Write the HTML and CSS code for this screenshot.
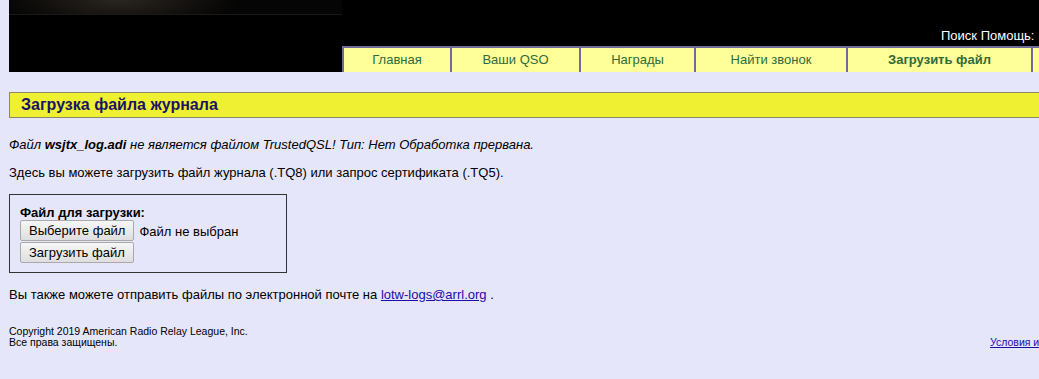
FILE: index.html
```html
<!DOCTYPE html>
<html lang="ru">
<head>
  <meta charset="UTF-8">
  <title>Загрузка файла журнала</title>
  <link rel="stylesheet" href="styles.css">
</head>
<body>

  <!-- header with logo strip, search links and menu -->
  <div class="header">
    <div class="logo-strip"></div>
    <div class="tools">Поиск Помощь:</div>
    <div class="menu">
      <a class="menu-item w1" href="#">Главная</a>
      <a class="menu-item w2" href="#">Ваши QSO</a>
      <a class="menu-item w3" href="#">Награды</a>
      <a class="menu-item w4" href="#">Найти звонок</a>
      <a class="menu-item w5 current" href="#">Загрузить файл</a>
      <a class="menu-item w6" href="#">Ваш аккаунт</a>
    </div>
  </div>

  <h2 class="page-title">Загрузка файла журнала</h2>

  <p class="warn"><i>Файл <b>wsjtx_log.adi</b> не является файлом TrustedQSL! Тип: Нет Обработка прервана.</i></p>
  <p class="text">Здесь вы можете загрузить файл журнала (.TQ8) или запрос сертификата (.TQ5).</p>

  <form class="upload">
    <div class="upload-label">Файл для загрузки:</div>
    <div class="file-row">
      <button type="button" class="btn">Выберите файл</button>
      <span class="no-file">Файл не выбран</span>
    </div>
    <button type="button" class="btn">Загрузить файл</button>
  </form>

  <p class="text mail">Вы также можете отправить файлы по электронной почте на <a href="#">lotw-logs@arrl.org</a> .</p>

  <div class="footer">
    <div class="copy">Copyright 2019 American Radio Relay League, Inc.<br>Все права защищены.</div>
    <a class="terms" href="#">Условия использования</a>
  </div>

</body>
</html>
```

FILE: styles.css
```css
html {
  overflow: hidden;
}

body {
  margin: 0 0 0 9px;
  background-color: #e6e6fa;
  font-family: "Liberation Sans", Arial, sans-serif;
  font-size: 13px;
  color: #000;
  width: 1120px;
}

/* header */
.header {
  background-color: #000;
  height: 72px;
  display: flex;
  flex-direction: column;
}

.logo-strip {
  width: 333px;
  height: 14px;
  border-bottom: 1px solid #1c1a18;
  background: radial-gradient(ellipse 120px 30px at 110px 0, #2a2520 0%, #100e0c 70%, #050505 100%);
}

.tools {
  color: #fff;
  font-size: 13px;
  height: 31px;
  line-height: 42px;
  padding-left: 932px;
}

.menu {
  margin-left: 333px;
  display: flex;
  border-top: 2px solid #6f6b9a;
  border-left: 2px solid #6f6b9a;
  height: 24px;
  margin-top: auto;
}

.menu-item {
  flex: none;
  background-color: #ffff99;
  color: #2f6b3c;
  text-decoration: none;
  font-size: 13px;
  line-height: 24px;
  text-align: center;
  border-right: 2px solid #6f6b9a;
}

.menu-item.current {
  font-weight: bold;
}

.w1 { width: 106px; }
.w2 { width: 127px; }
.w3 { width: 113px; }
.w4 { width: 150px; }
.w5 { width: 183px; }
.w6 { width: 150px; }

/* title bar */
.page-title {
  margin: 20px 0 0;
  background-color: #f0f033;
  border: 1px solid #8a8a6a;
  color: #1b1464;
  font-size: 16px;
  height: 24px;
  line-height: 24px;
  padding-left: 11px;
}

.warn {
  margin: 19px 0 0;
  line-height: 16px;
}

.text {
  margin: 12px 0 0;
  line-height: 16px;
}

/* upload box */
.upload {
  margin-top: 13px;
  width: 256px;
  border: 1px solid #333;
  padding: 10px 10px 8px 10px;
}

.upload-label {
  font-weight: bold;
  line-height: 15px;
}

.file-row {
  display: flex;
  align-items: center;
  gap: 5px;
}

.btn {
  font-family: "Liberation Sans", Arial, sans-serif;
  font-size: 13px;
  color: #000;
  background: linear-gradient(#f6f6f6, #dedede);
  border: 1px solid #a9a9a9;
  border-radius: 2px;
  height: 21px;
  padding: 0 8px;
  margin: 0 0 1px;
}

.mail {
  margin-top: 14px;
}

.mail a {
  color: #1a0dab;
}

/* footer */
.footer {
  margin-top: 23px;
  display: flex;
  align-items: flex-end;
  font-size: 10.5px;
}

.copy {
  flex: none;
  width: 981px;
  line-height: 11px;
}

.terms {
  color: #1a0dab;
  white-space: nowrap;
}
```
